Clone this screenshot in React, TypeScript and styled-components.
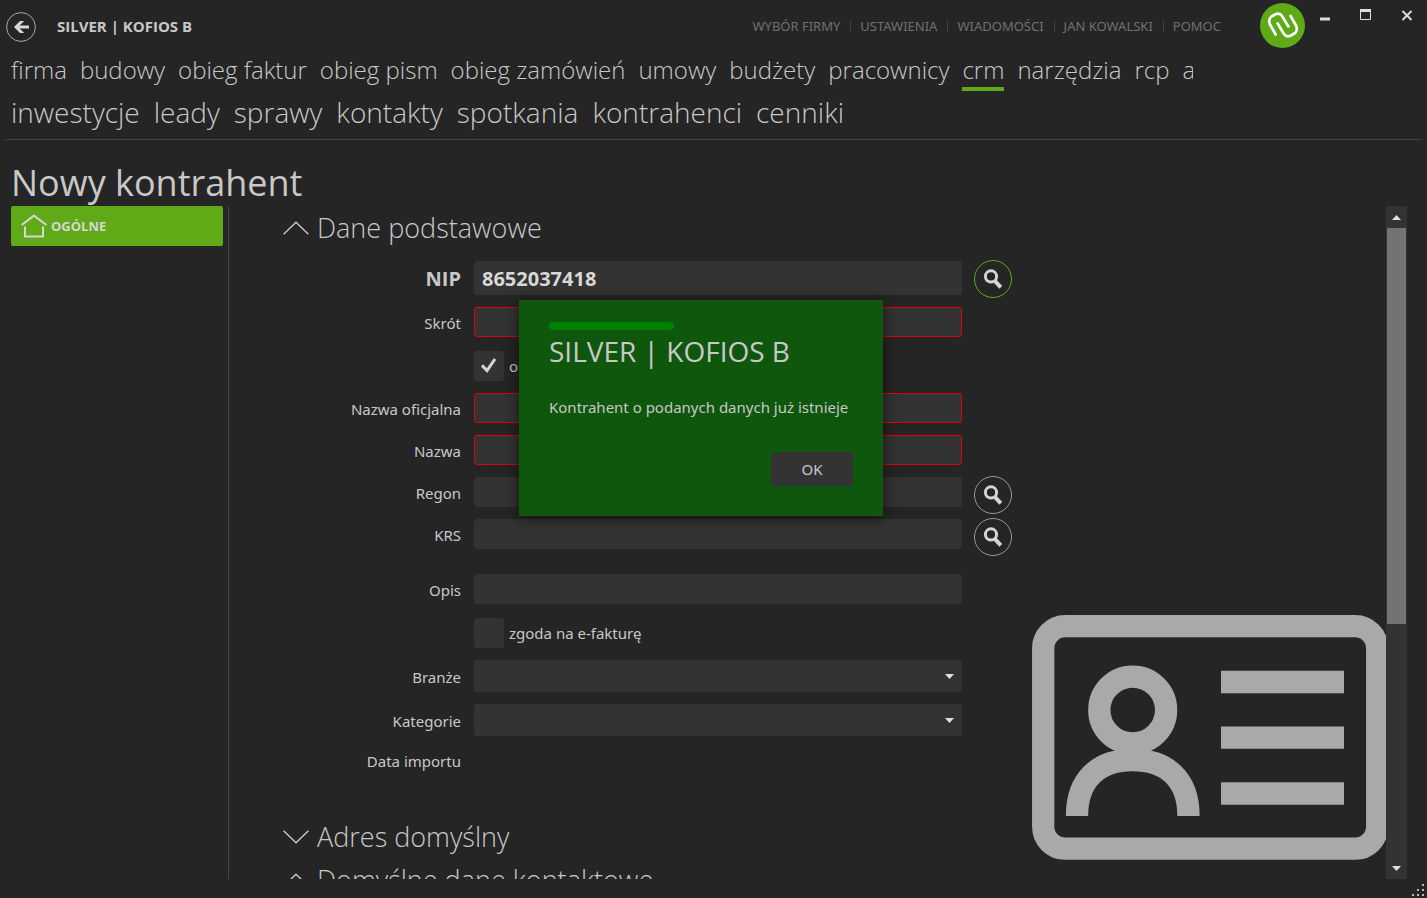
import React from 'react';
import styled, { createGlobalStyle, css } from 'styled-components';

const Global = createGlobalStyle`
  * { box-sizing: border-box; }
  body { margin: 0; background: #252525; }
  button, input, select { font: inherit; color: inherit; }
`;

const Shell = styled.div`
  position: relative;
  display: flex;
  flex-direction: column;
  height: 100vh;
  overflow: hidden;
  background: #252525;
  color: #c8c8c8;
  font-family: 'Noto Sans', 'Open Sans', sans-serif;
  font-size: 15px;
`;

const TitleBar = styled.header`
  display: flex;
  align-items: center;
  height: 50px;
  flex: none;
  padding: 3px 10px 0 6px;
`;

const BackButton = styled.button`
  width: 30px;
  height: 30px;
  padding: 0;
  border: 0;
  background: none;
  svg { display: block; }
`;

const AppName = styled.div`
  flex: 1;
  margin-left: 21px;
  padding-bottom: 2px;
  font-family: 'Open Sans', sans-serif;
  font-size: 15px;
  line-height: 20px;
  font-weight: 700;
`;

const UserMenu = styled.nav`
  display: flex;
  align-items: center;
  margin-right: 39px;
  padding-bottom: 2px;
  font-size: 13px;
`;

const UserLink = styled.a`
  color: #707070;
  text-decoration: none;
  line-height: 14px;
  & + & {
    margin-left: 10px;
    padding-left: 10px;
    background: linear-gradient(#3f3f3f, #3f3f3f) left / 1px 12px no-repeat;
  }
`;

const Logo = styled.svg`
  align-self: flex-start;
  width: 45px;
  height: 45px;
  margin-right: 10px;
  flex: none;
`;

const WindowControls = styled.div`
  display: flex;
  align-self: flex-start;
  gap: 21px;
  padding-top: 2px;
`;

const WindowButton = styled.button`
  display: grid;
  place-items: center;
  width: 20px;
  height: 20px;
  padding: 0;
  border: 0;
  background: none;
`;

const Menu = styled.nav<{ $large?: boolean }>`
  display: flex;
  flex: none;
  gap: ${p => (p.$large ? 14 : 13)}px;
  margin: 0 234px 0 11px;
  height: 42px;
  overflow: hidden;
  white-space: nowrap;
  font-family: 'Open Sans', sans-serif;
  font-weight: 300;
  font-size: ${p => (p.$large ? 28 : 24)}px;
  line-height: 40px;
`;

const MenuLink = styled.a<{ $active?: boolean }>`
  height: 41px;
  color: inherit;
  text-decoration: none;
  ${p => p.$active && css`background: linear-gradient(#60a917, #60a917) bottom / 100% 4px no-repeat;`}
`;

const Divider = styled.hr`
  flex: none;
  width: calc(100% - 11px);
  margin: 5px 6px 0 5px;
  border: 0;
  border-top: 1px solid #434343;
`;

const PageTitle = styled.h1`
  flex: none;
  margin: 19px 11px 0;
  font-family: 'Open Sans', sans-serif;
  font-size: 36px;
  line-height: 47px;
  font-weight: 400;
`;

const Workspace = styled.div`
  display: flex;
  flex: 1;
  min-height: 0;
  margin: 0 20px 19px 11px;
`;

const Sidebar = styled.nav`
  width: 218px;
  flex: none;
  padding-right: 5px;
  border-right: 1px solid #434343;
`;

const SideLink = styled.a`
  display: flex;
  align-items: center;
  gap: 4px;
  height: 40px;
  padding-left: 10px;
  border-radius: 2px;
  background: #60a917;
  color: #d6d6d6;
  font-family: 'Open Sans', sans-serif;
  font-size: 13px;
  font-weight: 700;
  text-decoration: none;
`;

const Content = styled.main`
  position: relative;
  flex: 1;
  min-width: 0;
  overflow: hidden;
  padding-left: 54px;
`;

const SectionHeader = styled.button`
  display: flex;
  align-items: center;
  gap: 8px;
  height: 43px;
  padding: 0;
  border: 0;
  background: none;
  font-family: 'Open Sans', sans-serif;
  font-size: 27px;
  line-height: 43px;
  font-weight: 300;
`;

const Form = styled.form`
  display: flex;
  flex-direction: column;
  gap: 12px;
  padding: 12px 0 43px;
`;

const Row = styled.div<{ $gapAbove?: boolean }>`
  display: grid;
  grid-template-columns: 179px minmax(0, 488px) 38px;
  column-gap: 12px;
  align-items: center;
  margin-top: ${p => (p.$gapAbove ? 13 : 0)}px;
`;

const Label = styled.label<{ $strong?: boolean }>`
  padding: 2px 1px 0 0;
  text-align: right;
  line-height: 22px;
  ${p => p.$strong && css`font-family: 'Open Sans', sans-serif; font-size: 20px; font-weight: 700;`}
`;

const TextBox = styled.input<{ $invalid?: boolean; $strong?: boolean }>`
  width: 100%;
  height: ${p => (p.$strong ? 34 : 30)}px;
  padding: 0 7px;
  border: 1px solid ${p => (p.$invalid ? '#e00008' : '#333')};
  border-radius: 3px;
  background: #333;
  outline: 0;
  ${p => p.$strong && css`color: #d8d8d8; font-family: 'Open Sans', sans-serif; font-size: 20px; font-weight: 700;`}
`;

const RoundButton = styled.button<{ $accent?: boolean }>`
  display: grid;
  place-items: center;
  width: 38px;
  height: 38px;
  margin: ${p => (p.$accent ? '-1px 0 -3px' : '-1px 0 -7px')};
  padding: 0;
  border: 1px solid ${p => (p.$accent ? '#60a917' : '#999')};
  border-radius: 50%;
  background: #252525;
`;

const CheckLabel = styled.label`
  grid-column: 2;
  display: flex;
  align-items: center;
  gap: 5px;
  margin: 2px 0 0;
`;

const CheckBox = styled.input`
  appearance: none;
  width: 30px;
  height: 30px;
  margin: 0;
  border-radius: 3px;
  background: #333;
`;

const CheckHolder = styled.span`
  position: relative;
  display: flex;
  svg { position: absolute; inset: 0; pointer-events: none; }
`;

const SelectHolder = styled.span`
  position: relative;
  display: flex;
  svg { position: absolute; right: 8px; top: 14px; pointer-events: none; }
`;

const Select = styled.select`
  appearance: none;
  width: 100%;
  height: 32px;
  border: 0;
  border-radius: 3px;
  background: #333;
`;

const CardArt = styled.svg`
  position: absolute;
  right: -3px;
  bottom: 19px;
  width: 357px;
  height: 245px;
`;

const ScrollTrack = styled.div`
  display: flex;
  flex-direction: column;
  flex: none;
  width: 21px;
  padding: 0 1px;
  background: #333;
`;

const ScrollButton = styled.button`
  display: grid;
  place-items: center;
  height: 22px;
  padding: 0;
  border: 0;
  background: none;
`;

const ScrollRail = styled.div`
  flex: 1;
`;

const ScrollThumb = styled.div`
  height: 63%;
  background: #737373;
`;

const DialogLayer = styled.div`
  position: absolute;
  inset: 0 25px 82px 0;
  display: grid;
  place-items: center;
`;

const Dialog = styled.section`
  display: flex;
  flex-direction: column;
  min-width: 364px;
  padding: 22px 30px 30px;
  background: #0f570c;
  box-shadow: 0 2px 14px rgba(0, 0, 0, 0.6);
`;

const DialogAccent = styled.div`
  width: 125px;
  height: 8px;
  border-radius: 4px;
  background: #008000;
`;

const DialogTitle = styled.h2`
  margin: 0;
  font-family: 'Open Sans', sans-serif;
  font-size: 28px;
  line-height: 42px;
  font-weight: 400;
`;

const DialogText = styled.p`
  margin: 23px 0 33px;
  line-height: 24px;
`;

const DialogButton = styled.button`
  align-self: flex-end;
  width: 82px;
  height: 34px;
  border: 0;
  border-radius: 3px;
  background: #333;
`;

const Grip = styled.svg`
  position: absolute;
  right: 1px;
  bottom: 0;
`;

const Magnifier = () => (
  <svg width="20" height="20" viewBox="0 0 20 20" fill="none" stroke="#d4d4d4">
    <circle cx="8" cy="7.4" r="5.6" strokeWidth="3" />
    <path d="M11.4 11.4 17.8 18.4" strokeWidth="4" />
  </svg>
);

const Chevron = ({ up }: { up?: boolean }) => (
  <svg width="26" height="14" viewBox="0 0 26 14" fill="none" stroke="#c8c8c8" strokeWidth="1.4">
    <path d={up ? 'M.6 13.2 13 1.2 25.4 13.2' : 'M.6.8 13 12.8 25.4.8'} />
  </svg>
);

const Triangle = ({ up }: { up?: boolean }) => (
  <svg width="9" height="5" viewBox="0 0 9 5" fill="#e0e0e0">
    <path d={up ? 'M0 5 4.5 0 9 5Z' : 'M0 0H9L4.5 5Z'} />
  </svg>
);

const userLinks = ['WYBÓR FIRMY', 'USTAWIENIA', 'WIADOMOŚCI', 'JAN KOWALSKI', 'POMOC'];
const modules = ['firma', 'budowy', 'obieg faktur', 'obieg pism', 'obieg zamówień', 'umowy', 'budżety', 'pracownicy', 'crm', 'narzędzia', 'rcp', 'a'];
const pages = ['inwestycje', 'leady', 'sprawy', 'kontakty', 'spotkania', 'kontrahenci', 'cenniki'];

type FieldProps = { id: string; label: string; value?: string; strong?: boolean; invalid?: boolean; search?: boolean; gapAbove?: boolean };

const Field = ({ id, label, value, strong, invalid, search, gapAbove }: FieldProps) => (
  <Row $gapAbove={gapAbove}>
    <Label htmlFor={id} $strong={strong}>{label}</Label>
    <TextBox id={id} defaultValue={value} $strong={strong} $invalid={invalid} />
    {search && <RoundButton type="button" $accent={strong} aria-label={`Szukaj: ${label}`}><Magnifier /></RoundButton>}
  </Row>
);

const Check = ({ label, checked }: { label: string; checked?: boolean }) => (
  <Row>
    <CheckLabel>
      <CheckHolder>
        <CheckBox type="checkbox" defaultChecked={checked} />
        {checked && (
          <svg width="30" height="30" viewBox="0 0 30 30" fill="none" stroke="#d4d4d4" strokeWidth="3">
            <path d="M8 14.4 13 19.6 21 8" />
          </svg>
        )}
      </CheckHolder>
      {label}
    </CheckLabel>
  </Row>
);

const Choice = ({ id, label }: { id: string; label: string }) => (
  <Row>
    <Label htmlFor={id}>{label}</Label>
    <SelectHolder><Select id={id} /><Triangle /></SelectHolder>
  </Row>
);

export default function App() {
  return (
    <Shell>
      <Global />
      <TitleBar>
        <BackButton aria-label="Wstecz">
          <svg width="30" height="30" viewBox="0 0 30 30" fill="none" stroke="#d8d8d8">
            <circle cx="15" cy="15" r="14.4" stroke="#a8a8a8" />
            <path d="M23 15H10" strokeWidth="3" />
            <path d="M8 15 14 9H18.200L12.200 15 18.200 21H14Z" fill="#d8d8d8" stroke="none" />
          </svg>
        </BackButton>
        <AppName>SILVER | KOFIOS B</AppName>
        <UserMenu>
          {userLinks.map(t => <UserLink href="#" key={t}>{t}</UserLink>)}
        </UserMenu>
        <Logo viewBox="0 0 45 45" fill="none" stroke="#fff" strokeWidth="2.6" strokeLinejoin="round">
          <circle cx="22.500" cy="22.500" r="22.500" fill="#60a917" stroke="none" />
          <path d="M16.200 32.500 10 21.500C8.500 18 9 15.500 11.500 13.500L15 11.500C18 10 20.500 10.600 22 13L29 24.500" />
          <path d="M17 19.500 24 31C25.500 33.400 28 34 31 32.500L34.500 30.500C37 28.500 37.500 26 36 22.500L30 12" />
        </Logo>
        <WindowControls>
          <WindowButton aria-label="Minimalizuj"><svg width="12" height="12"><path d="M1 8.500H11V11.500H1Z" fill="#ddd" /></svg></WindowButton>
          <WindowButton aria-label="Maksymalizuj"><svg width="12" height="12" fill="none" stroke="#ddd"><path d="M.5 1V10.500H10.500V1" /><path d="M0 1.500H11" strokeWidth="3" /></svg></WindowButton>
          <WindowButton aria-label="Zamknij"><svg width="12" height="12" fill="none" stroke="#ddd" strokeWidth="2"><path d="M1.500 2 10.500 11M10.500 2 1.500 11" /></svg></WindowButton>
        </WindowControls>
      </TitleBar>
      <Menu>
        {modules.map(t => <MenuLink href="#" key={t} $active={t === 'crm'}>{t}</MenuLink>)}
      </Menu>
      <Menu $large>
        {pages.map(t => <MenuLink href="#" key={t}>{t}</MenuLink>)}
      </Menu>
      <Divider />
      <PageTitle>Nowy kontrahent</PageTitle>
      <Workspace>
        <Sidebar>
          <SideLink href="#">
            <svg width="26" height="24" viewBox="0 0 26 24" fill="none" stroke="#d6d6d6" strokeWidth="2">
              <path d="M.6 11 13 1.600 25.400 11M4 12.500V22.500H22V12.500" />
            </svg>
            OGÓLNE
          </SideLink>
        </Sidebar>
        <Content>
          <SectionHeader><Chevron up />Dane podstawowe</SectionHeader>
          <Form>
            <Field id="nip" label="NIP" value="8652037418" strong search />
            <Field id="short" label="Skrót" invalid />
            <Check label="o" checked />
            <Field id="official" label="Nazwa oficjalna" invalid />
            <Field id="name" label="Nazwa" invalid />
            <Field id="regon" label="Regon" search />
            <Field id="krs" label="KRS" search />
            <Field id="notes" label="Opis" gapAbove />
            <Check label="zgoda na e-fakturę" />
            <Choice id="sector" label="Branże" />
            <Choice id="category" label="Kategorie" />
            <Row><Label as="span">Data importu</Label></Row>
          </Form>
          <SectionHeader><Chevron />Adres domyślny</SectionHeader>
          <SectionHeader><Chevron up />Domyślne dane kontaktowe</SectionHeader>
          <CardArt viewBox="0 0 357 245" fill="none" stroke="#a9a9a9" strokeWidth="22.300">
            <rect x="11.200" y="11.200" width="334" height="222.500" rx="22" />
            <circle cx="100.700" cy="95" r="33.400" />
            <path d="M45 201C45 165 66 145 100.700 145S156.500 165 156.500 201" />
            <path d="M189 67H312M189 122.700H312M189 178.500H312" />
          </CardArt>
        </Content>
        <ScrollTrack>
          <ScrollButton aria-label="W górę"><Triangle up /></ScrollButton>
          <ScrollRail><ScrollThumb /></ScrollRail>
          <ScrollButton aria-label="W dół"><Triangle /></ScrollButton>
        </ScrollTrack>
      </Workspace>
      <DialogLayer>
        <Dialog role="dialog" aria-label="SILVER | KOFIOS B">
          <DialogAccent />
          <DialogTitle>SILVER | KOFIOS B</DialogTitle>
          <DialogText>Kontrahent o podanych danych już istnieje</DialogText>
          <DialogButton>OK</DialogButton>
        </Dialog>
      </DialogLayer>
      <Grip width="14" height="14" fill="#b8b8b8">
        <path d="M10 0h2v2h-2zM5 5h2v2H5zM10 5h2v2h-2zM0 10h2v2H0zM5 10h2v2H5zM10 10h2v2h-2z" />
      </Grip>
    </Shell>
  );
}
